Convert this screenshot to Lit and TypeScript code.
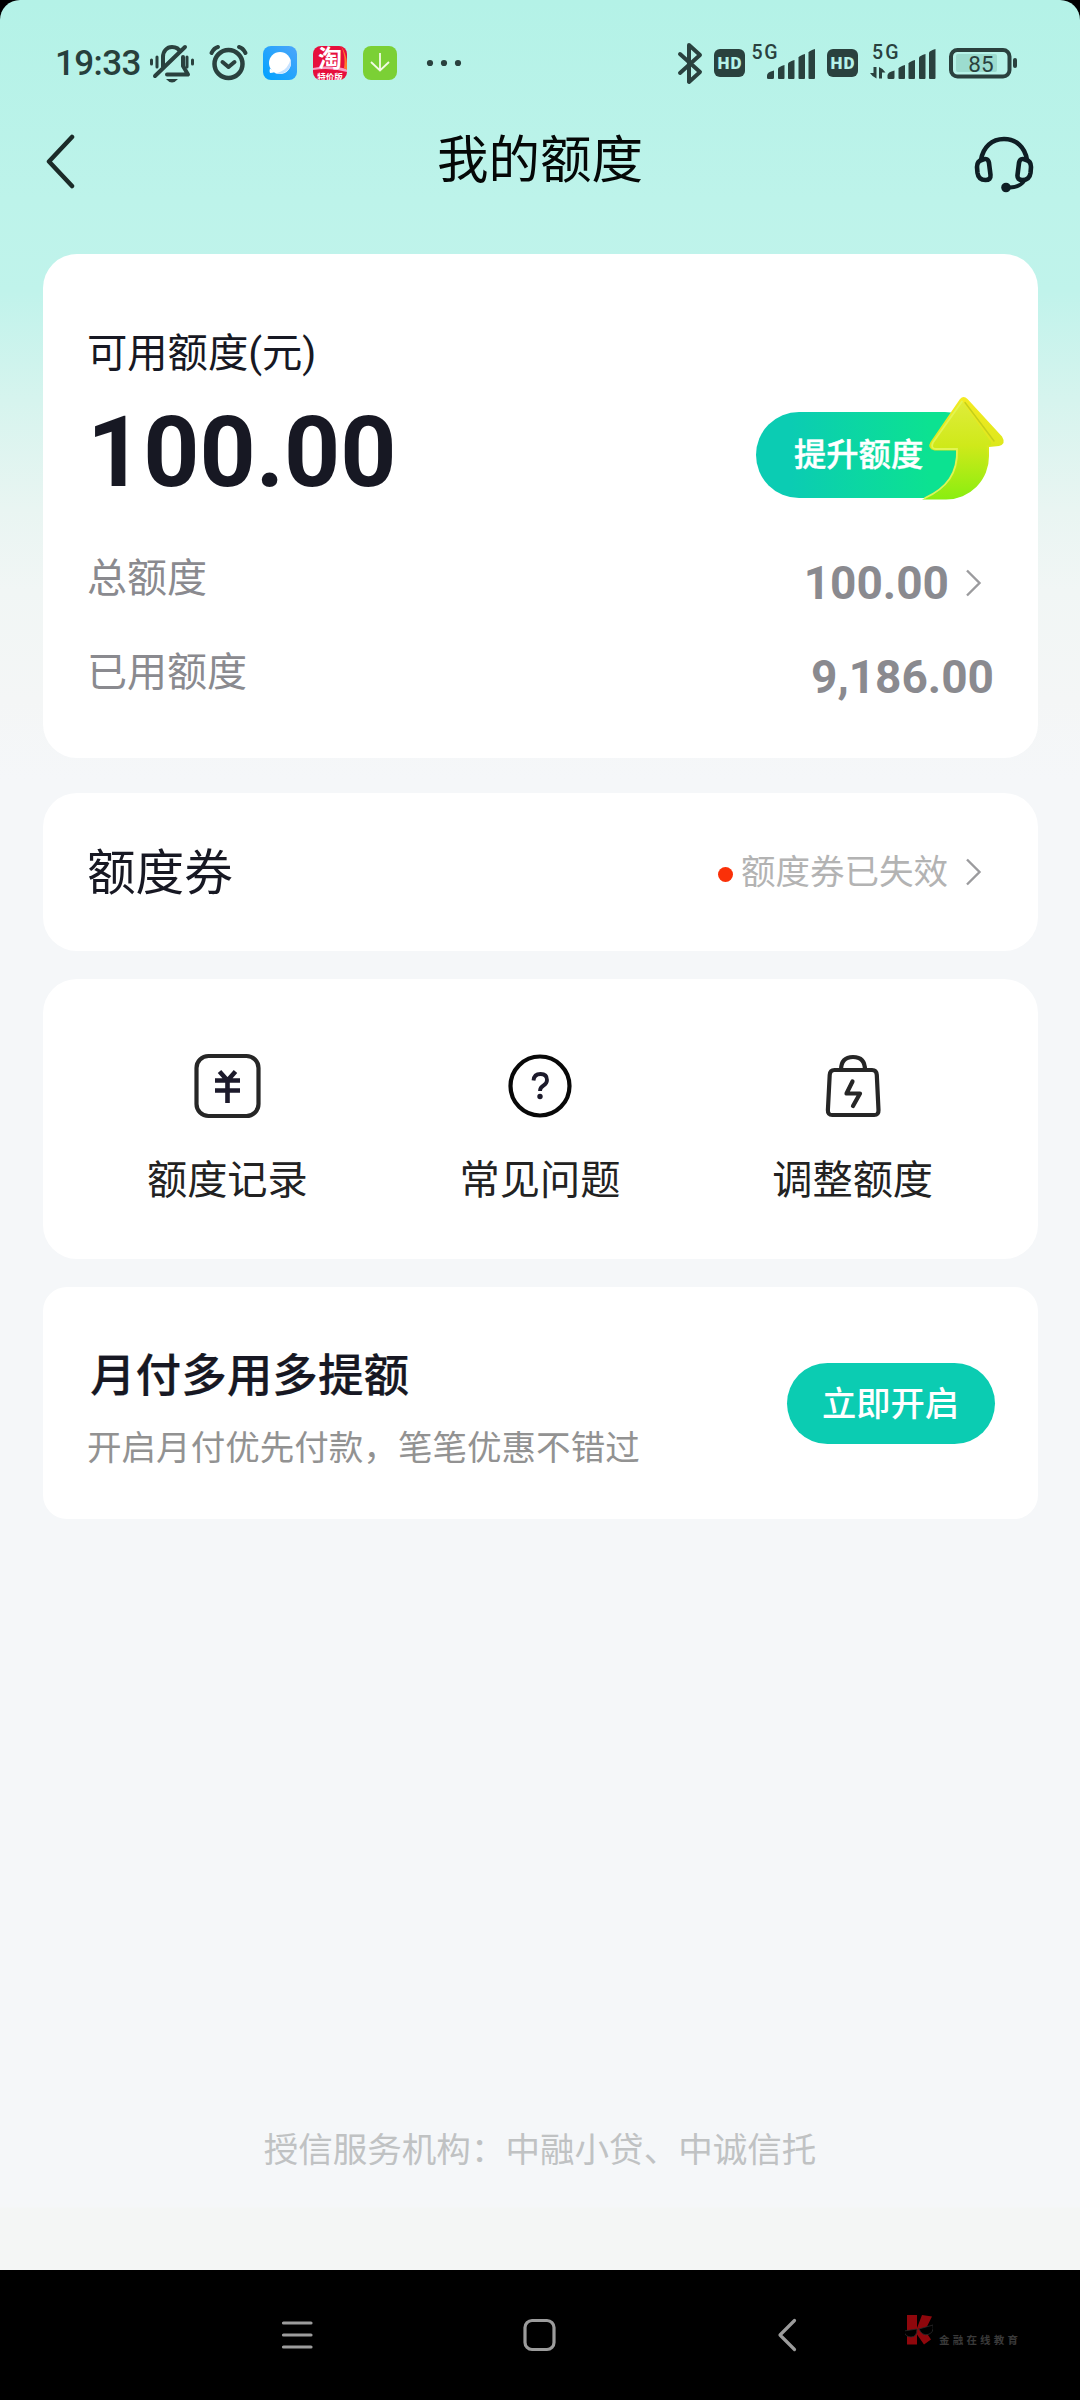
import { LitElement, html, css, svg } from "lit";
import { customElement, property } from "lit/decorators.js";

const signalBars = svg`
  <path d="M0 29.500v-2.500q0-3.500 7-5v7q0 1.500-1.500 1.500h-4q-1.500 0-1.500-1z" />
  <path d="M11 29.500V20q1-2 6.500-3.500v13q0 1-1 1H12q-1 0-1-1z" />
  <path d="M21 29.500V15q1-2 6.500-3.500v18q0 1-1 1H22q-1 0-1-1z" />
  <path d="M31.500 29.500V9q1-2 6.500-3.500v24q0 1-1 1h-4.500q-1 0-1-1z" />
  <path d="M41.500 29.500V4q1-2 6.500-3.500v29q0 1-1 1h-4.500q-1 0-1-1z" />`;

@customElement("status-bar")
export class StatusBar extends LitElement {
  static styles = css`
    :host { display: flex; height: 100px; box-sizing: border-box; padding: 0 62px 0 55px; align-items: flex-start; color: #27403c; }
    svg { display: block; flex: none; fill: #2a413e; overflow: visible; }
    .group { display: flex; align-items: flex-start; height: 100px; }
    .right { margin-left: auto; }
    .time { width: 95px; padding-top: 43px; font: 500 35px/41px Roboto, sans-serif; letter-spacing: -0.6px; box-sizing: border-box; }
    .line { fill: none; stroke: #2a413e; stroke-width: 4; stroke-linecap: round; stroke-linejoin: round; }
    .thin { stroke-width: 3; }
    .thick { stroke-width: 4.5; }
    .gap-s { margin-left: 7px; }
    .gap-m { margin-left: 12px; }
    .gap-l { margin-left: 15px; }
    .gap-xl { margin-left: 29px; }
    .volte { margin-left: 11px; }
    text { font-family: Roboto, "Noto Sans CJK SC", sans-serif; }
  `;

  private hd() {
    return html`<svg width="31" height="100" viewBox="0 0 31 100">
      <rect y="49" width="31" height="28" rx="6" />
      <text x="3.500" y="69" font-size="17" font-weight="900" fill="#b6f2e8" textLength="24">HD</text>
    </svg>`;
  }

  render() {
    return html`
      <div class="group">
        <div class="time">19:33</div>
        <svg width="44" height="100" viewBox="150 0 44 100">
          <path class="line" d="M163 67V57c0-6 4-10 9-10 4 0 7 2 8 5M183 57v9l5 8.500h-21M155 76l30-29" />
          <path d="M166 79h12q-3 3.500-6 3.500t-6-3.500z" />
          <path class="line thin" d="M151.500 60v4M157 57v10M187 57v10M192.500 60v4" />
        </svg>
        <svg class="gap-l" width="39" height="100" viewBox="209 0 39 100">
          <circle class="line thick" cx="228.500" cy="64" r="14" />
          <path class="line" d="M222.500 62l6 5 6-5M211.500 53q2.500-5 6.500-6M245.500 53q-2.500-5-6.500-6" />
        </svg>
        <svg class="gap-l" width="34" height="100" viewBox="263 0 34 100">
          <defs><linearGradient id="b" x1="0" y1="1" x2="1" y2="0"><stop stop-color="#00a2ff" /><stop offset="1" stop-color="#4da6fa" /></linearGradient></defs>
          <rect x="263" y="46" width="34" height="34" rx="8" fill="url(#b)" />
          <circle cx="280" cy="63" r="11" fill="#fff" />
          <path d="M270 68.500q-1 3 0 4.500 2 0 5-1z" fill="#fff" />
          <path d="M290.500 59q2 7-3 11.500t-12.500 3q8-2 11.500-6t4-8.500z" fill="#c6e2ff" />
        </svg>
        <svg class="gap-l" width="35" height="100" viewBox="312 0 35 100">
          <defs><clipPath id="t"><rect x="313" y="46" width="34" height="34" rx="8" /></clipPath></defs>
          <g clip-path="url(#t)">
            <rect x="313" y="46" width="34" height="34" fill="#e60f3c" />
            <path d="M313 68q17-4 34 1v3q-17-5-34-2z" fill="#f7a0c4" />
            <path d="M341 46q7 10 6 24l-3-2q2-12-3-22z" fill="#ff7a2a" />
            <text x="330" y="67" text-anchor="middle" font-size="24" font-weight="700" fill="#fff">淘</text>
            <text x="330" y="80" text-anchor="middle" font-size="8.500" font-weight="700" fill="#fff">特价版</text>
          </g>
        </svg>
        <svg class="gap-l" width="35" height="100" viewBox="362 0 35 100">
          <rect x="363" y="46" width="34" height="34" rx="8" fill="#7bd035" />
          <path d="M380 53v17M371 62l9 8.500 9-8.500" fill="none" stroke="#f1fbe4" stroke-width="1.800" />
        </svg>
        <svg class="gap-xl" width="36" height="100" viewBox="426 0 36 100">
          <circle cx="430" cy="63" r="3.100" /><circle cx="444" cy="63" r="3.100" /><circle cx="458" cy="63" r="3.100" />
        </svg>
      </div>
      <div class="group right">
        <svg width="24" height="100" viewBox="676 0 24 100">
          <path class="line" d="M678 54l20 18-11 10V45l11 10-20 18" />
        </svg>
        <span class="gap-m">${this.hd()}</span>
        <svg class="gap-s" width="64" height="100" viewBox="751 0 64 100">
          <text x="750.500" y="59" font-size="19.500" font-weight="500" textLength="26">5G</text>
          <g transform="translate(766 48.500)">${signalBars}</g>
        </svg>
        <span class="volte">${this.hd()}</span>
        <svg class="gap-m" width="67" height="100" viewBox="869 0 67 100">
          <text x="871" y="59" font-size="19.500" font-weight="500" textLength="26.500">5G</text>
          <path d="M872.500 67h3v11.500q-4-1.500-6.500-5.500h3.500zM878 78.500V67q4 1.500 6.500 5.500H881v6z" />
          <g transform="translate(886.500 48.500)">${signalBars}</g>
        </svg>
        <svg class="gap-m" width="69" height="100" viewBox="949 0 69 100">
          <rect x="956" y="54" width="41" height="18" rx="2" fill="#9cdccf" />
          <rect class="line" x="951" y="50" width="58.500" height="26.500" rx="6.500" />
          <rect x="1013" y="58" width="4" height="10" rx="2" />
          <text x="981" y="71.500" text-anchor="middle" font-size="22.500">85</text>
        </svg>
      </div>`;
  }
}

@customElement("chevron-right")
export class ChevronRight extends LitElement {
  static styles = css`
    :host { display: block; width: 17px; height: 28px; flex: none; }
    svg { display: block; fill: none; stroke: #9b9b9e; stroke-width: 2.4; }
  `;
  render() {
    return html`<svg width="17" height="28" viewBox="0 0 17 28"><path d="M2 1.500L14.500 14 2 26.500" /></svg>`;
  }
}

@customElement("amount-row")
export class AmountRow extends LitElement {
  @property() label = "";
  @property() value = "";
  @property({ type: Boolean }) link = false;
  static styles = css`
    :host { display: flex; justify-content: space-between; align-items: flex-start; height: 60px; color: #8a8a8f; }
    .label { font-size: 40px; line-height: 60px; }
    .end { display: flex; align-items: center; height: 60px; padding: 4px 1px 0 0; }
    .value { font: 700 46px/60px Roboto, sans-serif; }
    chevron-right { margin: 0 12px 0 16px; }
  `;
  render() {
    return html`<div class="label">${this.label}</div>
      <div class="end"><span class="value">${this.value}</span>${this.link ? html`<chevron-right></chevron-right>` : ""}</div>`;
  }
}

const recordIcon = svg`
  <rect x="2.500" y="3" width="62" height="60" rx="12" stroke="#262626" />
  <path d="M25.500 18.500l8 9 8-9M21 27.500h25M21 37.500h25M33.500 27v23" stroke="#1c1a2b" stroke-width="4.600" />`;
const helpIcon = svg`
  <circle cx="33" cy="33" r="29.500" stroke="#080808" />
  <path d="M26.500 27.500q.5-6.500 7-6.500t6.500 6q0 3.500-3.500 5.500-3.500 2-3.500 5.500" stroke="#1c1a2b" stroke-width="3.800" />
  <circle cx="33" cy="43.500" r="2.700" fill="#1c1a2b" stroke="none" />`;
const bagIcon = svg`
  <path d="M14.500 17h37.500q4.500 0 4.800 5l1.700 35q.2 5-4.300 5h-42q-4.500 0-4.300-5l1.800-35q.3-5 4.800-5z" stroke="#262626" />
  <path d="M21 17q0-13 12-13t12 13" stroke="#262626" />
  <path d="M32.500 28.500l-6 12h13.500L33 53" stroke="#262626" stroke-linecap="round" stroke-linejoin="round" />`;

@customElement("app-root")
export class AppRoot extends LitElement {
  static styles = css`
    :host { display: block; width: 1080px; height: 2400px; background: #000; font-family: Roboto, "Noto Sans CJK SC", sans-serif; color: #171823; }
    * { box-sizing: border-box; }
    svg { display: block; }
    .screen {
      display: flex; flex-direction: column; height: 2270px; border-radius: 20px 20px 0 0;
      background: linear-gradient(#b4f2e7 0, #bdf3ea 200px, #c0f3eb 290px, #d6f4ee 400px, #e9f5f2 510px, #f1f6f5 590px, #f4f6f6 700px, #f5f7f9 780px, #f5f7f9 2207px, #f4f6f5 2208px);
    }
    .nav { display: grid; grid-template-columns: 70px 1fr 70px; align-items: center; height: 122px; padding: 0 44px; }
    .title { text-align: center; font-size: 51.5px; line-height: 76px; color: #050807; }
    .nav svg { fill: none; stroke-linecap: round; stroke-linejoin: round; }
    .service { margin: 7px 0 0 7px; }
    .cards { display: flex; flex-direction: column; width: 995px; margin: 32px 0 0 43px; }
    .card { background: #fff; border-radius: 34px; padding: 0 43px 0 44px; }
    .quota { height: 504px; padding-top: 70px; }
    .caption { font-size: 40.3px; line-height: 60px; }
    .balance { display: flex; justify-content: space-between; height: 150px; padding-right: 7px; }
    .amount { font: 700 98px/115px Roboto, sans-serif; padding-top: 11px; }
    .boost { position: relative; width: 232px; height: 86px; margin-top: 28px; padding-left: 38px; border-radius: 43px; background: linear-gradient(90deg, #0bccb3 15%, #0ce291 75%); color: #fff; font-size: 32.3px; font-weight: 500; line-height: 86px; -webkit-text-stroke: 0.4px #fff; }
    .arrow { position: absolute; left: 161px; top: -19px; }
    .rows { display: flex; flex-direction: column; gap: 34px; padding-top: 15px; }
    .coupon { display: flex; align-items: center; height: 158px; margin-top: 35px; font-size: 48.6px; }
    .coupon span { position: relative; top: -3px; }
    .state { display: flex; align-items: center; margin-left: auto; font-size: 34.5px; color: #b3b3b3; }
    .dot { width: 15px; height: 15px; margin: 4px 8px 0 0; border-radius: 50%; background: #fa3008; }
    .state chevron-right { margin: 0 13px 0 17px; }
    .tools { display: grid; grid-template-columns: repeat(3, 1fr); height: 280px; margin-top: 28px; padding: 74px 29px 0 28px; }
    .tool { display: flex; flex-direction: column; align-items: center; gap: 32px; font-size: 40.2px; line-height: 60px; color: #222; }
    .tool svg { fill: none; stroke-width: 4.2; }
    .promo { display: flex; align-items: center; justify-content: space-between; height: 232px; margin-top: 28px; border-radius: 24px; }
    .copy { padding-top: 11px; }
    .headline { padding-left: 3px; font-size: 45.6px; font-weight: 500; line-height: 66px; -webkit-text-stroke: 0.2px #171823; }
    .sub { margin-top: 12px; font-size: 34.55px; line-height: 52px; color: #929292; }
    .open { width: 208px; height: 81px; border-radius: 41px; background: #0bccb2; color: #fff; text-align: center; font-size: 34.3px; font-weight: 500; line-height: 82px; padding-right: 1px; }
    .footer { margin-top: auto; padding-bottom: 94px; text-align: center; font-size: 34.55px; line-height: 52px; color: #c0c2c3; }
    .system { display: flex; align-items: center; height: 130px; padding: 0 0 0 281px; }
    .system svg { fill: none; stroke: #9c9c9c; stroke-width: 3.2; stroke-linecap: round; stroke-linejoin: round; }
    .home { margin-left: 210px; }
    .back { margin-left: 220px; }
    .system .k { margin-left: 108px; margin-top: -11px; fill: #8f070c; stroke: none; }
    .mark { margin: 11px 0 0 6px; font-size: 10.5px; font-weight: 700; line-height: 16px; letter-spacing: 3.2px; color: #3a3a3a; }
  `;

  private tool(icon: unknown, label: string) {
    return html`<div class="tool"><svg width="66" height="66" viewBox="0 0 66 66" overflow="visible">${icon}</svg><span>${label}</span></div>`;
  }

  render() {
    return html`
      <div class="screen">
        <status-bar></status-bar>
        <div class="nav">
          <svg width="34" height="56" viewBox="0 0 34 56" stroke="#1b2b28" stroke-width="4.500"><path d="M28 4L5 28.500 28 53" /></svg>
          <div class="title">我的额度</div>
          <svg class="service" width="62" height="60" viewBox="973 136 62 60" stroke="#0e1e24" stroke-width="4.600">
            <path d="M981 161c2-13 11-21 23-21s21 8 23 21" />
            <path d="M982 161q6-3 7 3l1.500 12q.5 5-5 5-7 0-8-7l-.5-6q0-6 5-7z" />
            <path d="M1026 161q-6-3-7 3l-1.500 12q-.5 5 5 5 7 0 8-7l.5-6q0-6-5-7z" />
            <path d="M1024 182q-4 6-14 6.500" stroke-width="4" />
            <circle cx="1006" cy="188.500" r="4.800" fill="#0e1e24" stroke="none" />
          </svg>
        </div>

        <div class="cards">
          <div class="card quota">
            <div class="caption">可用额度(元)</div>
            <div class="balance">
              <div class="amount">100.00</div>
              <div class="boost">提升额度
                <svg class="arrow" width="92" height="110" viewBox="918 392 92 110">
                  <defs>
                    <linearGradient id="g" x1="0" y1="0" x2="0" y2="1"><stop stop-color="#f4ea22" /><stop offset=".45" stop-color="#dfe81c" /><stop offset="1" stop-color="#86ee12" /></linearGradient>
                    <linearGradient id="f" x1="0" y1="0" x2="0" y2="1"><stop stop-color="#dfec3a" /><stop offset=".45" stop-color="#cfe91a" /><stop offset="1" stop-color="#8aee10" /></linearGradient>
                  </defs>
                  <path d="M961 398q3.500-4 7.500 0l34.500 37.500q4.500 7.500-3 9.500l-10 1v9a43 43 0 0 1-43 43.500h-24c21-7 35-21 34.500-49h-22q-8-2-4-8.500z" fill="url(#g)" />
                  <path d="M964 401l28 40q1 3-2 3.500h-2.500c4 28-14 53.500-40.500 53.500h-20c22-8 33.500-23 32.500-50h-25q-4-1.500-1.500-5.500z" fill="url(#f)" />
                  <path d="M966 401.500l29 38.500" fill="none" stroke="#c4d01a" stroke-width="1.400" stroke-linecap="round" />
                  <path d="M963 400.500l-29 41q-3 6 3 6.500h21c1 24-10 39-32 49" fill="none" stroke="#e2f552" stroke-width="1.800" stroke-linecap="round" />
                </svg>
              </div>
            </div>
            <div class="rows">
              <amount-row label="总额度" value="100.00" link></amount-row>
              <amount-row label="已用额度" value="9,186.00"></amount-row>
            </div>
          </div>

          <div class="card coupon">
            <span>额度券</span>
            <div class="state"><i class="dot"></i><span>额度券已失效</span><chevron-right></chevron-right></div>
          </div>

          <div class="card tools">
            ${this.tool(recordIcon, "额度记录")}
            ${this.tool(helpIcon, "常见问题")}
            ${this.tool(bagIcon, "调整额度")}
          </div>

          <div class="card promo">
            <div class="copy"><div class="headline">月付多用多提额</div><div class="sub">开启月付优先付款，笔笔优惠不错过</div></div>
            <div class="open">立即开启</div>
          </div>
        </div>
        <div class="footer">授信服务机构：中融小贷、中诚信托</div>
      </div>

      <div class="system">
        <svg width="32" height="34" viewBox="0 0 32 34"><path d="M2.500 5h27.500M2.500 17h27.500M2.500 29h27.500" /></svg>
        <svg class="home" width="34" height="34" viewBox="0 0 34 34"><rect x="2" y="2.500" width="29" height="29" rx="7" /></svg>
        <svg class="back" width="20" height="34" viewBox="0 0 20 34"><path d="M17.500 2.500L3 17l14.500 14.500" /></svg>
        <svg class="k" width="28" height="34" viewBox="904 2313 28 34">
          <path d="M906 2315h10v13l5-13 10 1.500-7 14 6 9-7 5-7-10v10h-10z" />
          <path d="M903 2331l13-2q0 8-6 8t-7-6zM918 2329l14-4q1 8-5 9.500t-9-5.500z" fill="#000" stroke="#2b2b2b" stroke-width=".8" />
        </svg>
        <div class="mark">金融在线教育</div>
      </div>`;
  }
}
